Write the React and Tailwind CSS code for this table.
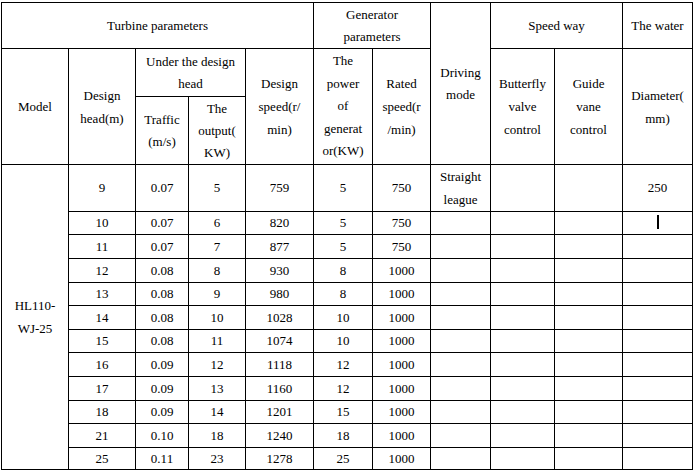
import React from 'react';

// Hydro-turbine spec table (HL110-WJ-25)
const rows = [
  ['9', '0.07', '5', '759', '5', '750'],
  ['10', '0.07', '6', '820', '5', '750'],
  ['11', '0.07', '7', '877', '5', '750'],
  ['12', '0.08', '8', '930', '8', '1000'],
  ['13', '0.08', '9', '980', '8', '1000'],
  ['14', '0.08', '10', '1028', '10', '1000'],
  ['15', '0.08', '11', '1074', '10', '1000'],
  ['16', '0.09', '12', '1118', '12', '1000'],
  ['17', '0.09', '13', '1160', '12', '1000'],
  ['18', '0.09', '14', '1201', '15', '1000'],
  ['21', '0.10', '18', '1240', '18', '1000'],
  ['25', '0.11', '23', '1278', '25', '1000'],
];

const rowHeights = ['h-[47px]', 'h-[23px]', 'h-[24px]', 'h-[24px]', 'h-[23px]', 'h-[24px]', 'h-[23px]', 'h-[24px]', 'h-[24px]', 'h-[23px]', 'h-[24px]', 'h-[22px]'];

const cell = 'border border-black p-0 text-center align-middle';

const App = () => {
  return (
    <div className="min-h-[472px] w-[697px] bg-white pl-[1px] pt-[2px] font-serif text-[13px] leading-[22px] text-black">
      <table className="w-[692px] table-fixed border-collapse font-[Liberation_Serif,serif]">
        <colgroup>
          <col className="w-[67px]" />
          <col className="w-[67px]" />
          <col className="w-[53px]" />
          <col className="w-[57px]" />
          <col className="w-[68px]" />
          <col className="w-[59px]" />
          <col className="w-[58px]" />
          <col className="w-[60px]" />
          <col className="w-[64px]" />
          <col className="w-[68px]" />
          <col className="w-[70px]" />
        </colgroup>
        <tbody>
          <tr className="h-[46px]">
            <td colSpan={5} className={cell}>Turbine parameters</td>
            <td colSpan={2} className={cell}>Generator<br />parameters</td>
            <td rowSpan={3} className={cell}>Driving<br />mode</td>
            <td colSpan={2} className={cell}>Speed way</td>
            <td className={cell}>The water</td>
          </tr>
          <tr className="h-[48px]">
            <td rowSpan={2} className={cell}>Model</td>
            <td rowSpan={2} className={`${cell} leading-[23px]`}>Design<br />head(m)</td>
            <td colSpan={2} className={cell}>Under the design<br />head</td>
            <td rowSpan={2} className={`${cell} leading-[23px]`}>Design<br />speed(r/<br />min)</td>
            <td rowSpan={2} className={`${cell} leading-[22.6px]`}>The<br />power<br />of<br />generat<br />or(KW)</td>
            <td rowSpan={2} className={`${cell} leading-[23px]`}>Rated<br />speed(r<br />/min)</td>
            <td rowSpan={2} className={`${cell} leading-[23px]`}>Butterfly<br />valve<br />control</td>
            <td rowSpan={2} className={`${cell} leading-[23px]`}>Guide<br />vane<br />control</td>
            <td rowSpan={2} className={`${cell} leading-[23px]`}>Diameter(<br />mm)</td>
          </tr>
          <tr className="h-[68px]">
            <td className={cell}>Traffic<br />(m/s)</td>
            <td className={cell}>The<br />output(<br />KW)</td>
          </tr>
          {rows.map((r, i) => (
            <tr key={i} className={`${rowHeights[i]} leading-[20px]`}>
              {i === 0 && (
                <td rowSpan={rows.length} className={`${cell} leading-[23px]`}>HL110-<br />WJ-25</td>
              )}
              {r.map((v, j) => (
                <td key={j} className={cell}>{v}</td>
              ))}
              <td className={`${cell} ${i === 0 ? 'leading-[23px]' : ''}`}>{i === 0 && <>Straight<br />league</>}</td>
              <td className={cell}></td>
              <td className={cell}></td>
              <td className={cell}>
                {i === 0 && '250'}
                {i === 1 && <span className="inline-block h-[14px] w-[2px] translate-y-[2px] bg-black" />}
              </td>
            </tr>
          ))}
        </tbody>
      </table>
    </div>
  );
};

export default App;
